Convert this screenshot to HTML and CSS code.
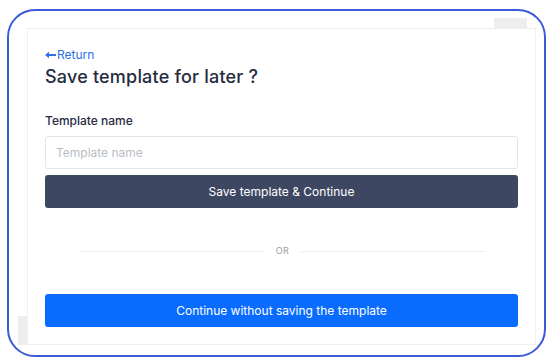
FILE: index.html
```
<!DOCTYPE html>
<html lang="en">

<head>
    <meta charset="utf-8">
    <meta name="viewport" content="width=device-width, initial-scale=1.0">
    <title>Save template</title>
    <link rel="stylesheet" href="styles.css">
</head>

<body>

    <div class="ramme">
        <span class="skygge skygge-top"></span>
        <span class="skygge skygge-bund"></span>

        <section class="kort">
            <a class="tilbage" href="#"><svg class="pil" width="11" height="8" viewBox="0 0 11 8"><path d="M0 4 L4 0.8 L4 3 L11 3 L11 5 L4 5 L4 7.2 Z" fill="#2d70e6"/></svg>Return</a>
            <h1>Save template for later ?</h1>

            <label class="etiket" for="navn">Template name</label>
            <input id="navn" class="felt" type="text" placeholder="Template name">
            <button class="knap knap-mork">Save template &amp; Continue</button>

            <div class="eller"><span>OR</span></div>

            <button class="knap knap-bla">Continue without saving the template</button>
        </section>
    </div>

</body>

</html>
```

FILE: styles.css
```
        body {
            margin: 0;
            background-color: white;
            font-family: Inter, "Noto Sans", sans-serif;
        }

        .ramme {
            position: relative;
            box-sizing: border-box;
            width: 539px;
            height: 348px;
            margin: 9px 0 0 7px;
            padding: 17px 8px 10px 18px;
            border: 2px solid #3b5bd6;
            border-radius: 28px;
        }

        /* graa felter bag kortet */
        .skygge {
            position: absolute;
            background-color: #eeeeee;
        }

        .skygge-top {
            top: 7px;
            right: 17px;
            width: 33px;
            height: 11px;
        }

        .skygge-bund {
            left: 9px;
            bottom: 10px;
            width: 10px;
            height: 29px;
        }

        .kort {
            position: relative;
            box-sizing: border-box;
            height: 100%;
            padding: 19px 17px 0 17px;
            background-color: white;
            border: 1px solid #eeeff1;
            display: flex;
            flex-direction: column;
        }

        .tilbage {
            display: flex;
            align-items: center;
            color: #2d70e6;
            font-size: 12px;
            line-height: 14px;
            text-decoration: none;
        }

        .pil {
            margin-right: 1px;
        }

        h1 {
            margin: 4px 0 0 0;
            font-size: 18px;
            line-height: 22px;
            font-weight: 500;
            color: #262c3f;
            letter-spacing: 0.2px;
        }

        .etiket {
            margin-top: 25px;
            font-size: 12px;
            line-height: 16px;
            font-weight: 500;
            color: #262c3f;
        }

        .felt {
            box-sizing: border-box;
            height: 33px;
            margin-top: 7px;
            padding: 0 10px;
            border: 1px solid #e3e5e9;
            border-radius: 3px;
            font-family: inherit;
            font-size: 12px;
            color: #262c3f;
        }

        .felt::placeholder {
            color: #b9bdc6;
        }

        .knap {
            height: 33px;
            border: none;
            border-radius: 3px;
            font-family: inherit;
            font-size: 12px;
            color: white;
        }

        .knap-mork {
            margin-top: 6px;
            background-color: #3e4761;
        }

        .knap-bla {
            background-color: #0a6cff;
        }

        .eller {
            display: flex;
            align-items: center;
            gap: 11px;
            margin: 36px 33px 36px 35px;
            font-size: 9px;
            line-height: 14px;
            color: #9aa0aa;
            letter-spacing: 0.5px;
        }

        .eller::before,
        .eller::after {
            content: "";
            flex: 1;
            height: 1px;
            background-color: #eff0f2;
        }
```
